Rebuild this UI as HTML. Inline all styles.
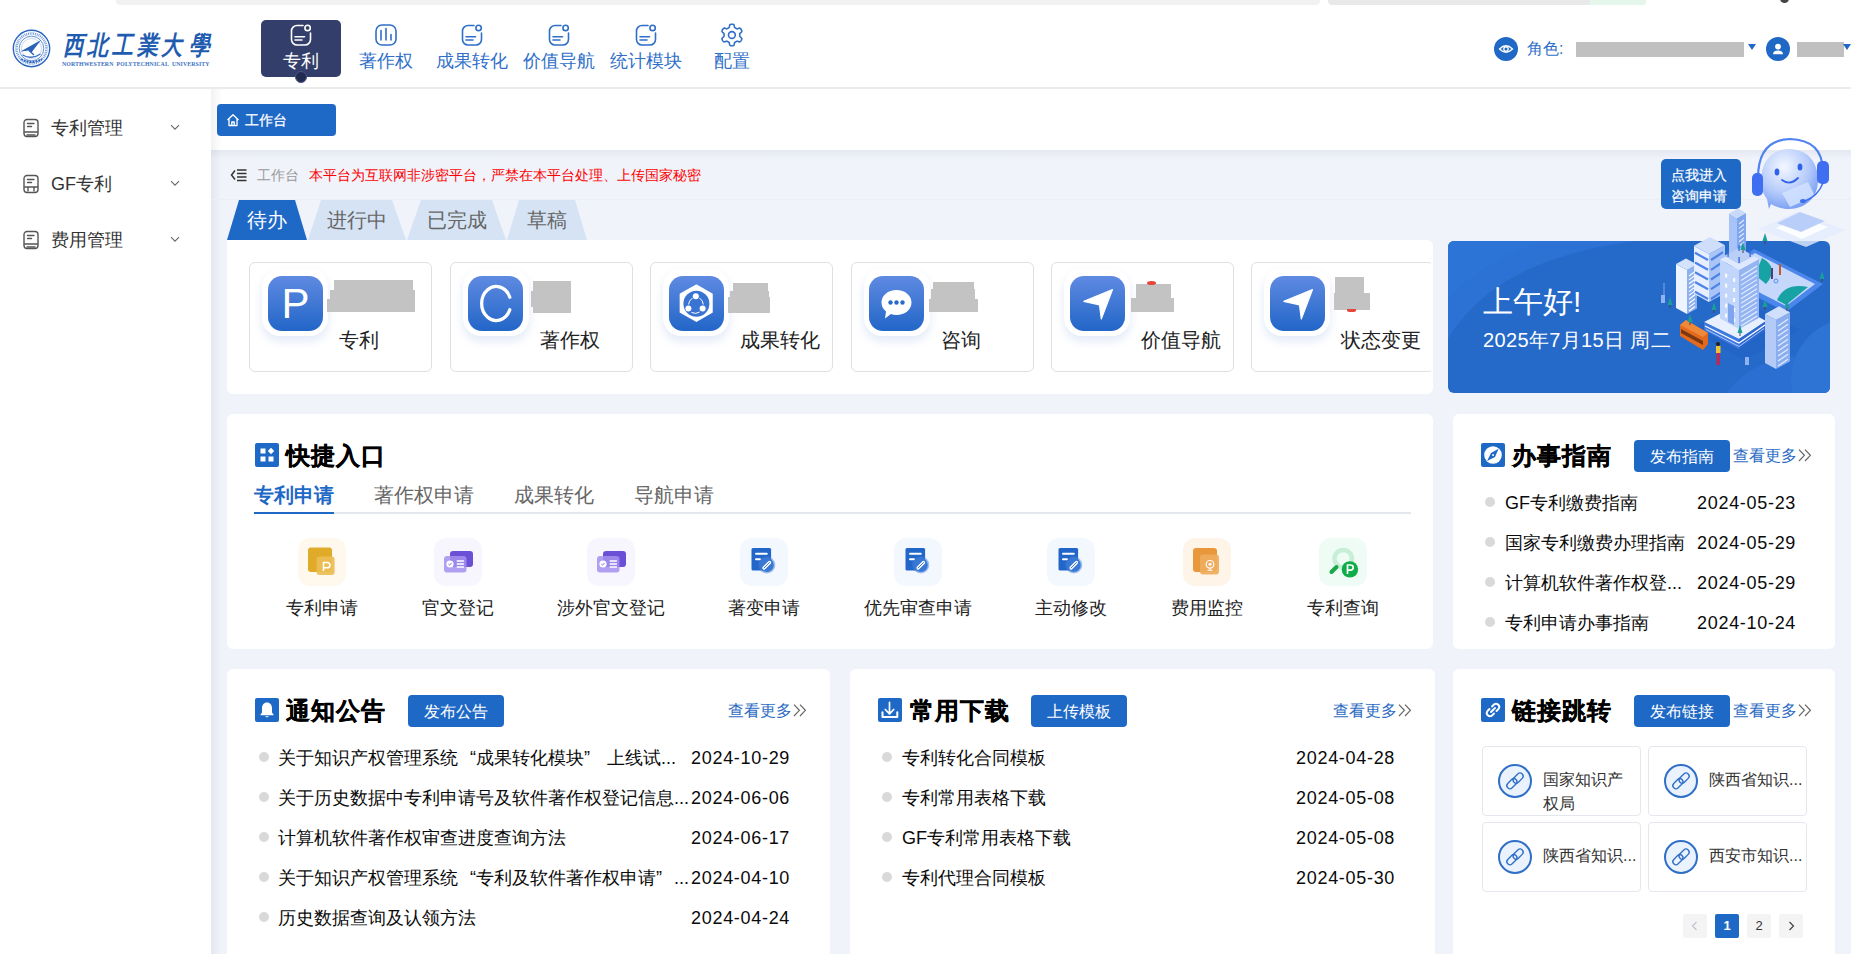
<!DOCTYPE html>
<html><head><meta charset="utf-8">
<style>
*{margin:0;padding:0;box-sizing:border-box}
html,body{width:1851px;height:954px;overflow:hidden;background:#fff;font-family:"Liberation Sans",sans-serif;color:#222}
.a{position:absolute}
.t{position:absolute;white-space:nowrap;line-height:1}
#hdr{left:0;top:0;width:1851px;height:89px;background:#fff;border-bottom:2px solid #eaeceb}
#side{left:0;top:89px;width:211px;height:865px;background:#fff}
#main{left:211px;top:89px;width:1640px;height:865px;background:#f0f3fa}
#tagbar{left:211px;top:89px;width:1640px;height:61px;background:#fff;}
.panel{position:absolute;background:#fff;border-radius:6px}
.btn{position:absolute;background:#1f69c6;color:#fff;border-radius:4px;font-size:16px;text-align:center;line-height:33.6px;height:32px}
.more{position:absolute;color:#2d6cc3;font-size:16px;line-height:1;white-space:nowrap}
.sec-t{position:absolute;font-size:24px;font-weight:bold;color:#000;line-height:1;white-space:nowrap;letter-spacing:1px;-webkit-text-stroke:0.3px #000}
.sec-i{position:absolute;width:24px;height:24px;background:#1f69c6;border-radius:2px}
.dot{position:absolute;width:10px;height:10px;border-radius:50%;background:#d9d9d9}
.row{position:absolute;font-size:18px;line-height:1;white-space:nowrap;color:#0a0a0a}
</style></head><body>

<div id="hdr" class="a"></div>
<div id="side" class="a"></div>
<div id="main" class="a"></div>
<div id="tagbar" class="a"></div>
<!-- top strip -->
<div class="a" style="left:116px;top:0;width:1204px;height:5px;background:#f1f1f1;border-radius:0 0 4px 4px"></div>
<div class="a" style="left:1328px;top:0;width:318px;height:5px;background:#e9e9e9;border-radius:0 0 4px 4px;overflow:hidden"><div class="a" style="left:262px;top:0;width:56px;height:5px;background:#e5f6ea"></div></div>
<div class="a" style="left:1780px;top:-6px;width:9px;height:9px;border-radius:50%;background:#444"></div>


<!-- logo -->
<svg class="a" style="left:12px;top:29px" width="39" height="39" viewBox="0 0 39 39">
<circle cx="19.5" cy="19.5" r="18.2" fill="none" stroke="#2a66c0" stroke-width="1.4"/>
<circle cx="19.5" cy="19.5" r="15" fill="none" stroke="#7aa0da" stroke-width="2.6" stroke-dasharray="1 0.8"/>
<circle cx="19.5" cy="19.5" r="12.3" fill="none" stroke="#3d74c6" stroke-width="0.8"/>
<circle cx="19.5" cy="19.5" r="10" fill="none" stroke="#9ab8e4" stroke-width="0.6"/>
<path d="M8.5 22.5L29 11L19.5 23.5L17 21.5Z" fill="#2a62b8"/>
<path d="M17 21.5L22 26" stroke="#2a62b8" stroke-width="1.4"/>
<path d="M10.5 26Q19.5 31 28.5 25" fill="none" stroke="#3a70c4" stroke-width="1.3"/>
<path d="M9 30Q19.5 36 30 30" fill="none" stroke="#2a66c0" stroke-width="2" stroke-dasharray="2 1"/>
</svg>
<div class="t" style="left:61.7px;top:33px;width:22px;text-align:center;font-size:22px;font-weight:bold;font-style:italic;color:#1f5cb0;transform:scale(0.95,1.17);transform-origin:center top">西</div><div class="t" style="left:86.0px;top:33px;width:22px;text-align:center;font-size:22px;font-weight:bold;font-style:italic;color:#1f5cb0;transform:scale(0.95,1.17);transform-origin:center top">北</div><div class="t" style="left:111.0px;top:33px;width:22px;text-align:center;font-size:22px;font-weight:bold;font-style:italic;color:#1f5cb0;transform:scale(0.95,1.17);transform-origin:center top">工</div><div class="t" style="left:135.6px;top:33px;width:22px;text-align:center;font-size:22px;font-weight:bold;font-style:italic;color:#1f5cb0;transform:scale(0.95,1.17);transform-origin:center top">業</div><div class="t" style="left:160.0px;top:33px;width:22px;text-align:center;font-size:22px;font-weight:bold;font-style:italic;color:#1f5cb0;transform:scale(0.95,1.17);transform-origin:center top">大</div><div class="t" style="left:188.3px;top:33px;width:22px;text-align:center;font-size:22px;font-weight:bold;font-style:italic;color:#1f5cb0;transform:scale(0.95,1.17);transform-origin:center top">學</div>
<div class="t" style="left:62px;top:62px;font-family:'Liberation Serif',serif;font-size:5.8px;font-weight:bold;color:#3a72c4;letter-spacing:0.12px">NORTHWESTERN&nbsp;&nbsp;POLYTECHNICAL&nbsp;&nbsp;UNIVERSITY</div>

<!-- nav -->
<div class="a" style="left:261px;top:20px;width:80px;height:57px;background:#333f6a;border-radius:5px"></div>
<div class="a" style="left:295px;top:71px;width:12px;height:12px;border-radius:50%;background:#222b52;border:1px solid #4a5580"></div>
<svg class="a" style="left:290px;top:24px" width="22" height="22" viewBox="0 0 22 22" fill="none" stroke="#fff" stroke-width="1.6" stroke-linecap="round"><path d="M13 1.5H7A5.5 5.5 0 0 0 1.5 7V15.5A5.5 5.5 0 0 0 7 21H15A5.5 5.5 0 0 0 20.5 15.5V9"/><circle cx="17.6" cy="3.9" r="2.7"/><path d="M5 12.8H14.5M5 16H12"/></svg>
<div class="t" style="left:283px;top:52px;font-size:18px;color:#fff">专利</div>

<svg class="a" style="left:375px;top:24px" width="22" height="22" viewBox="0 0 22 22" fill="none" stroke="#2f6fc8" stroke-width="1.6" stroke-linecap="round"><rect x="1" y="1" width="20" height="20" rx="6"/><path d="M6 6.5V16M11 4.5V16M16 10.5V16"/></svg>
<div class="t" style="left:359px;top:52px;font-size:18px;color:#2f6fc8">著作权</div>

<svg class="a" style="left:461px;top:24px" width="22" height="22" viewBox="0 0 22 22" fill="none" stroke="#2f6fc8" stroke-width="1.6" stroke-linecap="round"><path d="M13 1.5H7A5.5 5.5 0 0 0 1.5 7V15.5A5.5 5.5 0 0 0 7 21H15A5.5 5.5 0 0 0 20.5 15.5V9"/><circle cx="17.6" cy="3.9" r="2.7"/><path d="M5 12.8H14.5M5 16H12"/></svg>
<div class="t" style="left:436px;top:52px;font-size:18px;color:#2f6fc8">成果转化</div>

<svg class="a" style="left:548px;top:24px" width="22" height="22" viewBox="0 0 22 22" fill="none" stroke="#2f6fc8" stroke-width="1.6" stroke-linecap="round"><path d="M13 1.5H7A5.5 5.5 0 0 0 1.5 7V15.5A5.5 5.5 0 0 0 7 21H15A5.5 5.5 0 0 0 20.5 15.5V9"/><circle cx="17.6" cy="3.9" r="2.7"/><path d="M5 12.8H14.5M5 16H12"/></svg>
<div class="t" style="left:523px;top:52px;font-size:18px;color:#2f6fc8">价值导航</div>

<svg class="a" style="left:635px;top:24px" width="22" height="22" viewBox="0 0 22 22" fill="none" stroke="#2f6fc8" stroke-width="1.6" stroke-linecap="round"><path d="M13 1.5H7A5.5 5.5 0 0 0 1.5 7V15.5A5.5 5.5 0 0 0 7 21H15A5.5 5.5 0 0 0 20.5 15.5V9"/><circle cx="17.6" cy="3.9" r="2.7"/><path d="M5 12.8H14.5M5 16H12"/></svg>
<div class="t" style="left:610px;top:52px;font-size:18px;color:#2f6fc8">统计模块</div>

<svg class="a" style="left:719px;top:22px" width="26" height="26" viewBox="0 0 26 26" fill="none" stroke="#2f6fc8" stroke-width="1.6" stroke-linejoin="round"><path d="M20.75 13.00 L20.75 13.27 L20.74 13.55 L20.74 13.82 L20.75 14.10 L20.83 14.40 L21.06 14.74 L21.56 15.16 L22.20 15.67 L22.65 16.17 L22.81 16.61 L22.79 17.00 L22.69 17.36 L22.55 17.71 L22.39 18.05 L22.21 18.38 L22.01 18.70 L21.80 19.01 L21.57 19.30 L21.31 19.57 L20.98 19.78 L20.52 19.86 L19.86 19.72 L19.10 19.42 L18.49 19.20 L18.08 19.17 L17.78 19.25 L17.53 19.38 L17.30 19.52 L17.06 19.66 L16.83 19.80 L16.59 19.93 L16.35 20.06 L16.11 20.20 L15.87 20.35 L15.65 20.57 L15.48 20.94 L15.36 21.58 L15.24 22.39 L15.03 23.03 L14.73 23.39 L14.38 23.57 L14.02 23.66 L13.65 23.71 L13.28 23.74 L12.90 23.75 L12.52 23.74 L12.15 23.71 L11.78 23.66 L11.42 23.57 L11.07 23.39 L10.77 23.03 L10.56 22.39 L10.44 21.58 L10.32 20.94 L10.15 20.57 L9.93 20.35 L9.69 20.20 L9.45 20.06 L9.21 19.93 L8.98 19.80 L8.74 19.66 L8.50 19.52 L8.27 19.38 L8.02 19.25 L7.72 19.17 L7.31 19.20 L6.70 19.42 L5.94 19.72 L5.28 19.86 L4.82 19.78 L4.49 19.57 L4.23 19.30 L4.00 19.01 L3.79 18.70 L3.59 18.38 L3.41 18.05 L3.25 17.71 L3.11 17.36 L3.01 17.00 L2.99 16.61 L3.15 16.17 L3.60 15.67 L4.24 15.16 L4.74 14.74 L4.97 14.40 L5.05 14.10 L5.06 13.82 L5.06 13.55 L5.05 13.27 L5.05 13.00 L5.05 12.73 L5.06 12.45 L5.06 12.18 L5.05 11.90 L4.97 11.60 L4.74 11.26 L4.24 10.84 L3.60 10.33 L3.15 9.83 L2.99 9.39 L3.01 9.00 L3.11 8.64 L3.25 8.29 L3.41 7.95 L3.59 7.62 L3.79 7.30 L4.00 6.99 L4.23 6.70 L4.49 6.43 L4.82 6.22 L5.28 6.14 L5.94 6.28 L6.70 6.58 L7.31 6.80 L7.72 6.83 L8.02 6.75 L8.27 6.62 L8.50 6.48 L8.74 6.34 L8.97 6.20 L9.21 6.07 L9.45 5.94 L9.69 5.80 L9.93 5.65 L10.15 5.43 L10.32 5.06 L10.44 4.42 L10.56 3.61 L10.77 2.97 L11.07 2.61 L11.42 2.43 L11.78 2.34 L12.15 2.29 L12.52 2.26 L12.90 2.25 L13.28 2.26 L13.65 2.29 L14.02 2.34 L14.38 2.43 L14.73 2.61 L15.03 2.97 L15.24 3.61 L15.36 4.42 L15.48 5.06 L15.65 5.43 L15.87 5.65 L16.11 5.80 L16.35 5.94 L16.59 6.07 L16.83 6.20 L17.06 6.34 L17.30 6.48 L17.53 6.62 L17.78 6.75 L18.08 6.83 L18.49 6.80 L19.10 6.58 L19.86 6.28 L20.52 6.14 L20.98 6.22 L21.31 6.43 L21.57 6.70 L21.80 6.99 L22.01 7.30 L22.21 7.62 L22.39 7.95 L22.55 8.29 L22.69 8.64 L22.79 9.00 L22.81 9.39 L22.65 9.83 L22.20 10.33 L21.56 10.84 L21.06 11.26 L20.83 11.60 L20.75 11.90 L20.74 12.18 L20.74 12.45 L20.75 12.73Z"/><circle cx="12.9" cy="13" r="3.4"/></svg>
<div class="t" style="left:714px;top:52px;font-size:18px;color:#2f6fc8">配置</div>

<!-- right header -->
<div class="a" style="left:1494px;top:37px;width:24px;height:24px;border-radius:50%;background:#1f68c5"></div>
<svg class="a" style="left:1498px;top:41px" width="16" height="16" viewBox="0 0 16 16" fill="none" stroke="#fff" stroke-width="1.3"><path d="M1.5 8Q8 1.5 14.5 8Q8 14.5 1.5 8Z"/><circle cx="8" cy="8" r="2.2"/></svg>
<div class="t" style="left:1527px;top:41px;font-size:16px;color:#2f6fc8">角色:</div>
<div class="a" style="left:1576px;top:42px;width:168px;height:15px;background:#c0c0c0"></div>
<div class="a" style="left:1748px;top:44px;width:0;height:0;border-left:4.5px solid transparent;border-right:4.5px solid transparent;border-top:6px solid #1f68c5"></div>
<div class="a" style="left:1766px;top:37px;width:24px;height:24px;border-radius:50%;background:#1f68c5"></div>
<svg class="a" style="left:1770px;top:41px" width="16" height="16" viewBox="0 0 16 16" fill="#fff"><circle cx="8" cy="5.6" r="2.9"/><path d="M3 13.2Q3 9.4 8 9.4Q13 9.4 13 13.2Z"/></svg>
<div class="a" style="left:1797px;top:42px;width:47px;height:15px;background:#c0c0c0"></div>
<div class="a" style="left:1843px;top:44px;width:0;height:0;border-left:4.5px solid transparent;border-right:4.5px solid transparent;border-top:6px solid #1f68c5"></div>

<!-- sidebar shadow -->
<div class="a" style="left:211px;top:89px;width:11px;height:865px;background:linear-gradient(90deg,rgba(0,0,0,0.05),rgba(0,0,0,0))"></div>
<!-- side menu -->
<svg class="a" style="left:23px;top:118px" width="16" height="20" viewBox="0 0 16 20" fill="none" stroke="#555" stroke-width="1.4" stroke-linecap="round"><path d="M4 1.5H12A3 3 0 0 1 15 4.5V15.5A3 3 0 0 1 12 18.5H4A3 3 0 0 1 1 15.5V4.5A3 3 0 0 1 4 1.5Z"/><path d="M4.5 5.5H11M4.5 8.5H8.5M1.5 14H14.5M4 17H12"/></svg>
<div class="t" style="left:51px;top:119px;font-size:18px;color:#333">专利管理</div>
<svg class="a" style="left:170px;top:124px" width="10" height="7" viewBox="0 0 10 7" fill="none" stroke="#666" stroke-width="1.1"><path d="M1 1.2L5 5.2L9 1.2"/></svg>

<svg class="a" style="left:23px;top:174px" width="16" height="20" viewBox="0 0 16 20" fill="none" stroke="#555" stroke-width="1.4" stroke-linecap="round"><path d="M4 1.5H12A3 3 0 0 1 15 4.5V15.5A3 3 0 0 1 12 18.5H4A3 3 0 0 1 1 15.5V4.5A3 3 0 0 1 4 1.5Z"/><path d="M4.5 5.5H11M4.5 8.5H8.5M1.5 13H14.5M5 13V17M11 13V17"/></svg>
<div class="t" style="left:51px;top:175px;font-size:18px;color:#333">GF专利</div>
<svg class="a" style="left:170px;top:180px" width="10" height="7" viewBox="0 0 10 7" fill="none" stroke="#666" stroke-width="1.1"><path d="M1 1.2L5 5.2L9 1.2"/></svg>

<svg class="a" style="left:23px;top:230px" width="16" height="20" viewBox="0 0 16 20" fill="none" stroke="#555" stroke-width="1.4" stroke-linecap="round"><path d="M4 1.5H12A3 3 0 0 1 15 4.5V15.5A3 3 0 0 1 12 18.5H4A3 3 0 0 1 1 15.5V4.5A3 3 0 0 1 4 1.5Z"/><path d="M4.5 5.5H11M4.5 8.5H8.5M1.5 14H14.5M4 17H12"/></svg>
<div class="t" style="left:51px;top:231px;font-size:18px;color:#333">费用管理</div>
<svg class="a" style="left:170px;top:236px" width="10" height="7" viewBox="0 0 10 7" fill="none" stroke="#666" stroke-width="1.1"><path d="M1 1.2L5 5.2L9 1.2"/></svg>

<!-- tag -->
<div class="a" style="left:217px;top:104px;width:119px;height:32px;background:#1f69c6;border-radius:4px"></div>
<svg class="a" style="left:226px;top:113px" width="14" height="14" viewBox="0 0 14 14" fill="none" stroke="#fff" stroke-width="1.3" stroke-linejoin="round"><path d="M1.5 7L7 1.8L12.5 7M3 5.8V12.5H11V5.8M5.8 12.5V9H8.2V12.5"/></svg>
<div class="t" style="left:245px;top:112.5px;font-size:14px;color:#fff;-webkit-text-stroke:0.25px #fff">工作台</div>
<!-- breadcrumb -->
<svg class="a" style="left:230px;top:168px" width="18" height="14" viewBox="0 0 18 14" fill="none" stroke="#333" stroke-width="1.5"><path d="M5 2.5L1.5 7L5 11.5"/><path d="M7 2H16.5M7 5.5H16.5M7 9H16.5M7 12.5H16.5" stroke-width="1.6"/></svg>
<div class="t" style="left:257px;top:168px;font-size:14px;color:#999">工作台</div>
<div class="t" style="left:309px;top:168px;font-size:14px;color:#f00">本平台为互联网非涉密平台，严禁在本平台处理、上传国家秘密</div>
<div class="a" style="left:211px;top:150px;width:1640px;height:9px;background:linear-gradient(180deg,rgba(40,50,90,0.06),rgba(40,50,90,0))"></div>
<div class="a" style="left:211px;top:199px;width:1640px;height:1px;background:#ebeef6"></div>
<!-- tabs -->
<div class="a" style="left:227px;top:200px;width:80px;height:40px;background:#1f69c6;clip-path:polygon(12px 0,68px 0,80px 100%,0 100%)"></div>
<div class="t" style="left:247px;top:210px;font-size:20px;color:#fff">待办</div>
<div class="a" style="left:308px;top:200px;width:98px;height:40px;background:#d5e3f4;clip-path:polygon(13px 0,84px 0,98px 100%,0 100%)"></div>
<div class="t" style="left:327px;top:210px;font-size:20px;color:#666">进行中</div>
<div class="a" style="left:407px;top:200px;width:99px;height:40px;background:#d5e3f4;clip-path:polygon(14px 0,85px 0,99px 100%,0 100%)"></div>
<div class="t" style="left:427px;top:210px;font-size:20px;color:#666">已完成</div>
<div class="a" style="left:507px;top:200px;width:80px;height:40px;background:#d5e3f4;clip-path:polygon(12px 0,68px 0,80px 100%,0 100%)"></div>
<div class="t" style="left:527px;top:210px;font-size:20px;color:#666">草稿</div>

<div class="panel" style="left:227px;top:240px;width:1206px;height:154px;border-radius:0 6px 6px 6px"></div>
<div class="a" style="left:227px;top:240px;width:1204px;height:153px;overflow:hidden">
<div class="a" style="left:22.4px;top:22px;width:183px;height:110px;border:1px solid #e0e0e0;border-radius:6px;background:#fff"></div>
<div class="a" style="left:35.4px;top:29px;width:66px;height:67px;border-radius:18px;background:#fff;box-shadow:0 5px 10px rgba(60,110,200,0.15)"></div>
<div class="a" style="left:41.0px;top:36px;width:55px;height:55px;border-radius:14px;background:linear-gradient(180deg,#5f8ae2,#2266c7);overflow:hidden"><div class="t" style="left:0;top:0;width:55px;line-height:55px;text-align:center;font-size:42px;color:#fff;font-family:'Liberation Sans',sans-serif">P</div></div>
<div class="a" style="left:106.9px;top:40.0px;width:78.9px;height:10.0px;background:#c3c3c3"></div>
<div class="a" style="left:103.0px;top:50.0px;width:84.8px;height:9.2px;background:#c3c3c3"></div>
<div class="a" style="left:100.1px;top:59.2px;width:87.7px;height:12.6px;background:#c3c3c3"></div>
<div class="t" style="left:112.4px;top:90px;font-size:20px;color:#222">专利</div>
<div class="a" style="left:222.8px;top:22px;width:183px;height:110px;border:1px solid #e0e0e0;border-radius:6px;background:#fff"></div>
<div class="a" style="left:235.8px;top:29px;width:66px;height:67px;border-radius:18px;background:#fff;box-shadow:0 5px 10px rgba(60,110,200,0.15)"></div>
<div class="a" style="left:241.4px;top:36px;width:55px;height:55px;border-radius:14px;background:linear-gradient(180deg,#5f8ae2,#2266c7);overflow:hidden"><svg class="a" style="left:0;top:0" width="55" height="55" viewBox="0 0 55 55"><path d="M41.8 21.2A14.6 17 0 1 0 41.8 33.8" fill="none" stroke="#fff" stroke-width="3.3" stroke-linecap="round"/></svg></div>
<div class="a" style="left:306.0px;top:41.0px;width:38.0px;height:32.0px;background:#c3c3c3"></div>
<div class="a" style="left:304.0px;top:51.0px;width:2.5px;height:15.7px;background:#c3c3c3"></div>
<div class="t" style="left:312.8px;top:90px;font-size:20px;color:#222">著作权</div>
<div class="a" style="left:423.2px;top:22px;width:183px;height:110px;border:1px solid #e0e0e0;border-radius:6px;background:#fff"></div>
<div class="a" style="left:436.2px;top:29px;width:66px;height:67px;border-radius:18px;background:#fff;box-shadow:0 5px 10px rgba(60,110,200,0.15)"></div>
<div class="a" style="left:441.8px;top:36px;width:55px;height:55px;border-radius:14px;background:linear-gradient(180deg,#5f8ae2,#2266c7);overflow:hidden"><svg class="a" style="left:0;top:0" width="55" height="55" viewBox="0 0 55 55"><path d="M27.4 9.2L43 18.2V36.2L27.4 45.2L11.4 36.2V18.2Z" fill="#fff" stroke="#fff" stroke-width="1.5" stroke-linejoin="round"/><circle cx="27.4" cy="27.7" r="13" fill="#3a74d3"/><circle cx="26.8" cy="20.3" r="3" fill="#fff"/><circle cx="19.4" cy="32.6" r="3" fill="#fff"/><circle cx="33.6" cy="32.6" r="3" fill="#fff"/><path d="M30.5 22Q34 24.5 34.3 28.5M23.5 22Q19.5 25 19.6 28.5M22.5 36.5Q27 38.5 30.5 36" fill="none" stroke="#fff" stroke-width="1"/></svg></div>
<div class="a" style="left:506.0px;top:43.0px;width:35.0px;height:8.0px;background:#c3c3c3"></div>
<div class="a" style="left:503.0px;top:51.0px;width:39.0px;height:6.0px;background:#c3c3c3"></div>
<div class="a" style="left:501.0px;top:57.0px;width:42.0px;height:16.0px;background:#c3c3c3"></div>
<div class="t" style="left:513.2px;top:90px;font-size:20px;color:#222">成果转化</div>
<div class="a" style="left:623.6px;top:22px;width:183px;height:110px;border:1px solid #e0e0e0;border-radius:6px;background:#fff"></div>
<div class="a" style="left:636.6px;top:29px;width:66px;height:67px;border-radius:18px;background:#fff;box-shadow:0 5px 10px rgba(60,110,200,0.15)"></div>
<div class="a" style="left:642.2px;top:36px;width:55px;height:55px;border-radius:14px;background:linear-gradient(180deg,#5f8ae2,#2266c7);overflow:hidden"><svg class="a" style="left:9px;top:10px" width="37" height="37" viewBox="0 0 37 37"><path d="M18.5 4C27 4 33.5 9.5 33.5 16.5S27 29 18.5 29C16.5 29 14.6 28.7 12.9 28.1L7 32.5L8 25.5C5 23.2 3.5 20 3.5 16.5C3.5 9.5 10 4 18.5 4Z" fill="#fff"/><circle cx="12.5" cy="16.5" r="2.2" fill="#2a68c9"/><circle cx="18.5" cy="16.5" r="2.2" fill="#2a68c9"/><circle cx="24.5" cy="16.5" r="2.2" fill="#2a68c9"/></svg></div>
<div class="a" style="left:706.0px;top:42.0px;width:41.0px;height:7.0px;background:#c3c3c3"></div>
<div class="a" style="left:704.0px;top:49.0px;width:44.0px;height:10.0px;background:#c3c3c3"></div>
<div class="a" style="left:702.0px;top:59.0px;width:49.0px;height:13.0px;background:#c3c3c3"></div>
<div class="t" style="left:713.6px;top:90px;font-size:20px;color:#222">咨询</div>
<div class="a" style="left:824.0px;top:22px;width:183px;height:110px;border:1px solid #e0e0e0;border-radius:6px;background:#fff"></div>
<div class="a" style="left:837.0px;top:29px;width:66px;height:67px;border-radius:18px;background:#fff;box-shadow:0 5px 10px rgba(60,110,200,0.15)"></div>
<div class="a" style="left:842.6px;top:36px;width:55px;height:55px;border-radius:14px;background:linear-gradient(180deg,#5f8ae2,#2266c7);overflow:hidden"><svg class="a" style="left:0;top:0" width="55" height="55" viewBox="0 0 55 55"><path d="M13.8 25.4L42.5 13.5L31.3 43L29.5 28.8Z" fill="#fff" stroke="#fff" stroke-width="1.2" stroke-linejoin="round"/></svg></div>
<div class="a" style="left:909.0px;top:44.0px;width:35.0px;height:14.0px;background:#c3c3c3"></div>
<div class="a" style="left:904.0px;top:58.0px;width:43.0px;height:14.0px;background:#c3c3c3"></div>
<div class="t" style="left:914.0px;top:90px;font-size:20px;color:#222">价值导航</div>
<div class="a" style="left:1024.4px;top:22px;width:183px;height:110px;border:1px solid #e0e0e0;border-radius:6px;background:#fff"></div>
<div class="a" style="left:1037.4px;top:29px;width:66px;height:67px;border-radius:18px;background:#fff;box-shadow:0 5px 10px rgba(60,110,200,0.15)"></div>
<div class="a" style="left:1043.0px;top:36px;width:55px;height:55px;border-radius:14px;background:linear-gradient(180deg,#5f8ae2,#2266c7);overflow:hidden"><svg class="a" style="left:0;top:0" width="55" height="55" viewBox="0 0 55 55"><path d="M13.8 25.4L42.5 13.5L31.3 43L29.5 28.8Z" fill="#fff" stroke="#fff" stroke-width="1.2" stroke-linejoin="round"/></svg></div>
<div class="a" style="left:1108.0px;top:37.0px;width:29.0px;height:16.0px;background:#c3c3c3"></div>
<div class="a" style="left:1107.0px;top:53.0px;width:36.0px;height:17.0px;background:#c3c3c3"></div>
<div class="t" style="left:1114.4px;top:90px;font-size:20px;color:#222">状态变更</div>
<div class="a" style="left:920px;top:41px;width:9px;height:4px;border-radius:50%;background:#e8453c"></div>
<div class="a" style="left:1120px;top:69px;width:9px;height:3px;border-radius:0 0 50% 50%;background:#e8453c"></div>
</div>
<svg class="a" style="left:1448px;top:130px" width="403" height="270" viewBox="0 0 403 270"><defs><clipPath id="bc"><rect x="0" y="111" width="382" height="152" rx="6"/></clipPath><radialGradient id="rg" cx="0.4" cy="0.3" r="0.7"><stop offset="0" stop-color="#f4f7ff"/><stop offset="0.6" stop-color="#b8cdfb"/><stop offset="1" stop-color="#7ea3f3"/></radialGradient></defs><g clip-path="url(#bc)"><rect x="0" y="111" width="382" height="152" fill="#2569c9"/><path d="M0 111H190C150 115 100 127 60 150C30 168 10 192 0 209Z" fill="#2c72d5"/><path d="M0 111H95C70 118 40 135 20 150C10 158 4 165 0 170Z" fill="#2e76d8" opacity="0.6"/><circle cx="352" cy="318" r="92" fill="#2a6fd1"/><circle cx="405" cy="250" r="62" fill="#2d74d5"/><polygon points="242.0,200.0 297.0,170.0 352.0,200.0 297.0,230.0" fill="#1f5fc0" opacity="0.35"/></g><polygon points="306.0,119.0 375.0,154.0 338.0,182.0 268.0,146.0" fill="#4a86ec"/><polygon points="307.0,123.0 367.0,154.0 338.0,176.0 275.0,144.0" fill="#c5d7fa"/><path d="M314 128 Q332 138 318 154 L307 145Z" fill="#17a2a3"/><path d="M329 170 Q337 152 360 157 L338 175Z" fill="#17a2a3"/><circle cx="328" cy="151" r="2" fill="none" stroke="#5b8ef0" stroke-width="1"/><rect x="323" y="138" width="2" height="11" fill="#5a3a7a"/><rect x="331" y="134" width="2" height="11" fill="#c25a2a"/><polygon points="289.0,88.0 281.0,83.6 281.0,123.6 289.0,128.0" fill="#a8c3f7"/><polygon points="289.0,88.0 298.0,83.0 298.0,123.0 289.0,128.0" fill="#7fa6ee"/><polygon points="289.0,88.0 281.0,83.6 290.0,78.6 298.0,83.0" fill="#c8daf9"/><line x1="291.0" y1="94.0" x2="296.0" y2="90.0" stroke="#e2ecff" stroke-width="1.2"/><line x1="291.0" y1="98.4" x2="296.0" y2="94.5" stroke="#e2ecff" stroke-width="1.2"/><line x1="291.0" y1="102.9" x2="296.0" y2="98.9" stroke="#e2ecff" stroke-width="1.2"/><line x1="291.0" y1="107.3" x2="296.0" y2="103.3" stroke="#e2ecff" stroke-width="1.2"/><line x1="291.0" y1="111.7" x2="296.0" y2="107.8" stroke="#e2ecff" stroke-width="1.2"/><line x1="291.0" y1="116.1" x2="296.0" y2="112.2" stroke="#e2ecff" stroke-width="1.2"/><line x1="291.0" y1="120.6" x2="296.0" y2="116.6" stroke="#e2ecff" stroke-width="1.2"/><line x1="291.0" y1="125.0" x2="296.0" y2="121.0" stroke="#e2ecff" stroke-width="1.2"/><polygon points="256.0,192.0 289.0,175.0 318.0,191.0 291.0,209.0" fill="#e8f0ff"/><polygon points="256.0,192.0 291.0,209.0 291.0,219.0 256.0,200.0" fill="#3f7ae2"/><polygon points="291.0,209.0 318.0,191.0 318.0,200.0 291.0,219.0" fill="#2f68d0"/><polyline points="257.0,196.0 291.0,213.0 317.0,195.0" fill="none" stroke="#fff" stroke-width="1.3"/><polyline points="258.0,199.5 291.0,216.5 316.0,198.5" fill="none" stroke="#a8c4fa" stroke-width="1"/><polygon points="239.0,140.0 228.0,133.9 228.0,177.9 239.0,184.0" fill="#eef4ff"/><polygon points="239.0,140.0 249.0,134.5 249.0,178.5 239.0,184.0" fill="#8db0f0"/><polygon points="239.0,140.0 228.0,133.9 238.0,128.4 249.0,134.5" fill="#d5e2fb"/><line x1="241.0" y1="146.0" x2="247.0" y2="141.5" stroke="#ffffff" stroke-width="1.1"/><line x1="241.0" y1="149.9" x2="247.0" y2="145.4" stroke="#ffffff" stroke-width="1.1"/><line x1="241.0" y1="153.8" x2="247.0" y2="149.3" stroke="#ffffff" stroke-width="1.1"/><line x1="241.0" y1="157.7" x2="247.0" y2="153.2" stroke="#ffffff" stroke-width="1.1"/><line x1="241.0" y1="161.6" x2="247.0" y2="157.1" stroke="#ffffff" stroke-width="1.1"/><line x1="241.0" y1="165.4" x2="247.0" y2="160.9" stroke="#ffffff" stroke-width="1.1"/><line x1="241.0" y1="169.3" x2="247.0" y2="164.8" stroke="#ffffff" stroke-width="1.1"/><line x1="241.0" y1="173.2" x2="247.0" y2="168.7" stroke="#ffffff" stroke-width="1.1"/><line x1="241.0" y1="177.1" x2="247.0" y2="172.6" stroke="#ffffff" stroke-width="1.1"/><line x1="241.0" y1="181.0" x2="247.0" y2="176.5" stroke="#ffffff" stroke-width="1.1"/><polygon points="261.0,124.0 246.0,115.8 246.0,163.8 261.0,172.0" fill="#e6eeff"/><polygon points="261.0,124.0 277.0,115.2 277.0,163.2 261.0,172.0" fill="#a9c4f7"/><polygon points="261.0,124.0 246.0,115.8 262.0,107.0 277.0,115.2" fill="#cfdefb"/><line x1="263.0" y1="130.0" x2="275.0" y2="122.2" stroke="#4d82e8" stroke-width="2.2"/><line x1="263.0" y1="139.8" x2="275.0" y2="131.9" stroke="#4d82e8" stroke-width="2.2"/><line x1="263.0" y1="149.5" x2="275.0" y2="141.7" stroke="#4d82e8" stroke-width="2.2"/><line x1="263.0" y1="159.2" x2="275.0" y2="151.4" stroke="#4d82e8" stroke-width="2.2"/><line x1="263.0" y1="169.0" x2="275.0" y2="161.2" stroke="#4d82e8" stroke-width="2.2"/><line x1="260.0" y1="130.0" x2="247.0" y2="122.8" stroke="#4d82e8" stroke-width="2.2"/><line x1="260.0" y1="139.8" x2="247.0" y2="132.5" stroke="#4d82e8" stroke-width="2.2"/><line x1="260.0" y1="149.5" x2="247.0" y2="142.2" stroke="#4d82e8" stroke-width="2.2"/><line x1="260.0" y1="159.2" x2="247.0" y2="152.0" stroke="#4d82e8" stroke-width="2.2"/><line x1="260.0" y1="169.0" x2="247.0" y2="161.8" stroke="#4d82e8" stroke-width="2.2"/><polygon points="291.0,140.0 272.0,129.6 272.0,188.6 291.0,199.0" fill="#c2d5fa"/><polygon points="291.0,140.0 311.0,129.0 311.0,188.0 291.0,199.0" fill="#94b5f2"/><polygon points="291.0,140.0 272.0,129.6 292.0,118.6 311.0,129.0" fill="#dfe9fd"/><line x1="293.0" y1="146.0" x2="309.0" y2="136.0" stroke="#e6eeff" stroke-width="1.1"/><line x1="293.0" y1="150.5" x2="309.0" y2="140.5" stroke="#e6eeff" stroke-width="1.1"/><line x1="293.0" y1="155.1" x2="309.0" y2="145.1" stroke="#e6eeff" stroke-width="1.1"/><line x1="293.0" y1="159.6" x2="309.0" y2="149.6" stroke="#e6eeff" stroke-width="1.1"/><line x1="293.0" y1="164.2" x2="309.0" y2="154.2" stroke="#e6eeff" stroke-width="1.1"/><line x1="293.0" y1="168.7" x2="309.0" y2="158.7" stroke="#e6eeff" stroke-width="1.1"/><line x1="293.0" y1="173.3" x2="309.0" y2="163.3" stroke="#e6eeff" stroke-width="1.1"/><line x1="293.0" y1="177.8" x2="309.0" y2="167.8" stroke="#e6eeff" stroke-width="1.1"/><line x1="293.0" y1="182.4" x2="309.0" y2="172.4" stroke="#e6eeff" stroke-width="1.1"/><line x1="293.0" y1="186.9" x2="309.0" y2="176.9" stroke="#e6eeff" stroke-width="1.1"/><line x1="293.0" y1="191.5" x2="309.0" y2="181.5" stroke="#e6eeff" stroke-width="1.1"/><line x1="293.0" y1="196.0" x2="309.0" y2="186.0" stroke="#e6eeff" stroke-width="1.1"/><polygon points="291.0,134.0 276.0,126.0 291.0,118.0 306.0,126.0" fill="#b9cff8"/><rect x="279.4" y="121.0" width="1.4" height="6" fill="#3d6fd8"/><rect x="301.4" y="121.0" width="1.4" height="6" fill="#3d6fd8"/><rect x="290.4" y="127.0" width="1.4" height="6" fill="#3d6fd8"/><rect x="290.4" y="115.0" width="1.4" height="6" fill="#3d6fd8"/><rect x="285.0" y="148.0" width="2.2" height="4" fill="#ffffff" opacity="0.85"/><rect x="277.0" y="143.6" width="2.2" height="4" fill="#ffffff" opacity="0.85"/><rect x="285.0" y="158.0" width="2.2" height="4" fill="#ffffff" opacity="0.85"/><rect x="277.0" y="153.6" width="2.2" height="4" fill="#ffffff" opacity="0.85"/><rect x="285.0" y="168.0" width="2.2" height="4" fill="#ffffff" opacity="0.85"/><rect x="277.0" y="163.6" width="2.2" height="4" fill="#ffffff" opacity="0.85"/><rect x="285.0" y="178.0" width="2.2" height="4" fill="#ffffff" opacity="0.85"/><rect x="277.0" y="173.6" width="2.2" height="4" fill="#ffffff" opacity="0.85"/><rect x="285.0" y="188.0" width="2.2" height="4" fill="#ffffff" opacity="0.85"/><rect x="277.0" y="183.6" width="2.2" height="4" fill="#ffffff" opacity="0.85"/><polygon points="280.0,173.0 286.0,176.0 286.0,195.0 280.0,192.0" fill="#7fa5ee"/><polygon points="328.0,190.0 317.0,183.9 317.0,232.9 328.0,239.0" fill="#b4cbf7"/><polygon points="328.0,190.0 342.0,182.3 342.0,231.3 328.0,239.0" fill="#8aaef0"/><polygon points="328.0,190.0 317.0,183.9 331.0,176.2 342.0,182.3" fill="#d0dffb"/><line x1="330.0" y1="196.0" x2="340.0" y2="189.3" stroke="#e4edff" stroke-width="1.1"/><line x1="330.0" y1="201.0" x2="340.0" y2="194.3" stroke="#e4edff" stroke-width="1.1"/><line x1="330.0" y1="206.0" x2="340.0" y2="199.3" stroke="#e4edff" stroke-width="1.1"/><line x1="330.0" y1="211.0" x2="340.0" y2="204.3" stroke="#e4edff" stroke-width="1.1"/><line x1="330.0" y1="216.0" x2="340.0" y2="209.3" stroke="#e4edff" stroke-width="1.1"/><line x1="330.0" y1="221.0" x2="340.0" y2="214.3" stroke="#e4edff" stroke-width="1.1"/><line x1="330.0" y1="226.0" x2="340.0" y2="219.3" stroke="#e4edff" stroke-width="1.1"/><line x1="330.0" y1="231.0" x2="340.0" y2="224.3" stroke="#e4edff" stroke-width="1.1"/><line x1="330.0" y1="236.0" x2="340.0" y2="229.3" stroke="#e4edff" stroke-width="1.1"/><polygon points="232.0,195.0 238.0,190.0 260.0,203.0 260.0,214.0 255.0,220.0 232.0,206.0" fill="#e36a1c"/><polygon points="233.0,199.0 255.0,211.0 255.0,215.0 233.0,203.0" fill="#4a2410" opacity="0.7"/><polygon points="238.0,190.0 260.0,203.0 255.0,207.0 232.0,195.0" fill="#f0883a"/><circle cx="270" cy="214" r="2" fill="#222"/><rect x="268" y="216" width="4.5" height="7" fill="#f2c230"/><rect x="268.5" y="223" width="3.5" height="12" fill="#b8285a"/><path d="M295 112L297.5 120H292.5Z" fill="#1b9e9a"/><rect x="294.5" y="120" width="1" height="3" fill="#444"/><path d="M317 103L319.5 111H314.5Z" fill="#1b9e9a"/><rect x="316.5" y="111" width="1" height="3" fill="#444"/><path d="M374 141L376.5 149H371.5Z" fill="#1b9e9a"/><rect x="373.5" y="149" width="1" height="3" fill="#444"/><path d="M222 167L224.5 175H219.5Z" fill="#1b9e9a"/><rect x="221.5" y="175" width="1" height="3" fill="#444"/><path d="M242 184L244.5 192H239.5Z" fill="#1b9e9a"/><rect x="241.5" y="192" width="1" height="3" fill="#444"/><path d="M266 172L268.5 180H263.5Z" fill="#1b9e9a"/><rect x="265.5" y="180" width="1" height="3" fill="#444"/><path d="M292 195L294.5 203H289.5Z" fill="#1b9e9a"/><rect x="291.5" y="203" width="1" height="3" fill="#444"/><path d="M317 169L319.5 177H314.5Z" fill="#1b9e9a"/><rect x="316.5" y="177" width="1" height="3" fill="#444"/><path d="M339 170L341.5 178H336.5Z" fill="#1b9e9a"/><rect x="338.5" y="178" width="1" height="3" fill="#444"/><rect x="213" y="165" width="4" height="8" fill="#8eb2f2"/><line x1="216" y1="165" x2="216" y2="153" stroke="#9db8ee" stroke-width="0.8"/><rect x="297" y="227" width="4" height="8" fill="#8eb2f2"/><polygon points="310.0,99.0 349.0,82.0 397.0,100.0 358.0,117.0" fill="#e3ebfc" opacity="0.8"/><polygon points="328.0,98.0 353.0,87.0 380.0,97.0 354.0,109.0" fill="#fbfdff"/><polygon points="329.0,93.0 352.0,82.0 377.0,91.0 353.0,102.0" fill="#b9cff9"/><path d="M310 48Q310 10 342 9Q374 10 375 40" fill="none" stroke="#4f83f0" stroke-width="2.2"/><path d="M341 19C360 19 370 33 370 50C370 68 357 79 341 79C334 79 328 77 323 74L321 79L319 69C315 64 313 57 313 50C313 33 323 19 341 19Z" fill="url(#rg)"/><ellipse cx="329" cy="42" rx="2.4" ry="3.6" fill="#2e62e8"/><ellipse cx="352" cy="37" rx="2.4" ry="3.6" fill="#2e62e8"/><path d="M334 50Q342 56 350 48" fill="none" stroke="#2e62e8" stroke-width="1.8" stroke-linecap="round"/><rect x="304" y="43" width="11" height="23" rx="5" fill="#3f6ff0"/><rect x="369" y="31" width="12" height="23" rx="5" fill="#3f6ff0"/><polygon points="334.0,63.0 360.0,52.0 367.0,66.0 342.0,77.0" fill="#cfe0ff" opacity="0.9"/><path d="M375 53Q370 66 357 71" fill="none" stroke="#3f6ff0" stroke-width="1.5"/><ellipse cx="355" cy="71" rx="3" ry="2" fill="#3f6ff0"/></svg>
<div class="t" style="left:1483px;top:287px;font-size:30px;color:#fff">上午好!</div>
<div class="t" style="left:1483px;top:330px;font-size:20px;color:#fff;letter-spacing:0.35px">2025年7月15日 周二</div>
<div class="a" style="left:1661px;top:159px;width:80px;height:50px;background:#1f69c6;border-radius:5px"></div>
<div class="t" style="left:1671px;top:165px;font-size:14px;line-height:21px;color:#fff;-webkit-text-stroke:0.2px #fff">点我进入<br>咨询申请</div>

<div class="panel" style="left:227px;top:414px;width:1206px;height:235px"></div>
<div class="sec-i" style="left:255px;top:443px"></div>
<svg class="a" style="left:255px;top:443px" width="24" height="24" viewBox="0 0 24 24" fill="#fff"><rect x="5.5" y="5.5" width="5" height="5"/><rect x="5.5" y="13.5" width="5" height="5"/><rect x="13.5" y="13.5" width="5" height="5"/><path d="M16 4.8L19.2 8L16 11.2L12.8 8Z"/></svg>
<div class="sec-t" style="left:286px;top:444px">快捷入口</div>
<div class="a" style="left:254px;top:512px;width:1157px;height:2px;background:#e4e7ed"></div>
<div class="a" style="left:254px;top:512px;width:80px;height:2px;background:#1f69c6"></div>
<div class="t" style="left:254px;top:485px;font-size:20px;color:#1f69c6;font-weight:bold">专利申请</div>
<div class="t" style="left:374px;top:485px;font-size:20px;color:#666">著作权申请</div>
<div class="t" style="left:514px;top:485px;font-size:20px;color:#666">成果转化</div>
<div class="t" style="left:634px;top:485px;font-size:20px;color:#666">导航申请</div>
<div class="a" style="left:297.8px;top:538px;width:48px;height:48px;border-radius:12px;background:#fff8ec"></div>
<svg class="a" style="left:297.8px;top:538px" width="48" height="48" viewBox="0 0 48 48"><rect x="10" y="9.5" width="24" height="24.5" rx="3" fill="#e1ab2a"/><rect x="18.6" y="18.6" width="18" height="18.4" rx="3" fill="#ebbd55" opacity="0.92"/><path d="M25.5 33V24.5H29Q32 24.5 32 27.2Q32 29.8 29 29.8H25.5" fill="none" stroke="#fff" stroke-width="1.6"/></svg>
<div class="t" style="left:285.8px;top:598.7px;font-size:18px;color:#222">专利申请</div>
<div class="a" style="left:434.0px;top:538px;width:48px;height:48px;border-radius:12px;background:#f7f6fe"></div>
<svg class="a" style="left:434.0px;top:538px" width="48" height="48" viewBox="0 0 48 48"><rect x="16" y="13" width="23" height="16" rx="3" fill="#6b4fd6"/><rect x="10" y="18" width="22.5" height="16.5" rx="3" fill="#a591ee" opacity="0.85"/><circle cx="16" cy="26" r="3.6" fill="#fff"/><path d="M14.4 26L15.6 27.2L17.6 24.9" fill="none" stroke="#8a72e6" stroke-width="1"/><path d="M22.7 23H29.9M22.7 26H29.9M22.7 29H29.9" stroke="#fff" stroke-width="1.3"/></svg>
<div class="t" style="left:422.0px;top:598.7px;font-size:18px;color:#222">官文登记</div>
<div class="a" style="left:587.0px;top:538px;width:48px;height:48px;border-radius:12px;background:#f7f6fe"></div>
<svg class="a" style="left:587.0px;top:538px" width="48" height="48" viewBox="0 0 48 48"><rect x="16" y="13" width="23" height="16" rx="3" fill="#6b4fd6"/><rect x="10" y="18" width="22.5" height="16.5" rx="3" fill="#a591ee" opacity="0.85"/><circle cx="16" cy="26" r="3.6" fill="#fff"/><path d="M14.4 26L15.6 27.2L17.6 24.9" fill="none" stroke="#8a72e6" stroke-width="1"/><path d="M22.7 23H29.9M22.7 26H29.9M22.7 29H29.9" stroke="#fff" stroke-width="1.3"/></svg>
<div class="t" style="left:557.0px;top:598.7px;font-size:18px;color:#222">涉外官文登记</div>
<div class="a" style="left:740.2px;top:538px;width:48px;height:48px;border-radius:12px;background:#f3f8ff"></div>
<svg class="a" style="left:740.2px;top:538px" width="48" height="48" viewBox="0 0 48 48"><rect x="11.5" y="10" width="19.6" height="22.4" rx="1.5" fill="#2266c9"/><path d="M16 15.7H26.8M16 21.2H20" stroke="#fff" stroke-width="2" stroke-linecap="round"/><circle cx="26.8" cy="27" r="8.5" fill="#4a86dc" opacity="0.5"/><circle cx="26.8" cy="27" r="7" fill="#3a78d6"/><path d="M24 30L29.5 24.5" stroke="#fff" stroke-width="3.2" stroke-linecap="round"/><path d="M24 30L29.5 24.5" stroke="#3a78d6" stroke-width="1" stroke-linecap="round"/></svg>
<div class="t" style="left:728.2px;top:598.7px;font-size:18px;color:#222">著变申请</div>
<div class="a" style="left:893.8px;top:538px;width:48px;height:48px;border-radius:12px;background:#f3f8ff"></div>
<svg class="a" style="left:893.8px;top:538px" width="48" height="48" viewBox="0 0 48 48"><rect x="11.5" y="10" width="19.6" height="22.4" rx="1.5" fill="#2266c9"/><path d="M16 15.7H26.8M16 21.2H20" stroke="#fff" stroke-width="2" stroke-linecap="round"/><circle cx="26.8" cy="27" r="8.5" fill="#4a86dc" opacity="0.5"/><circle cx="26.8" cy="27" r="7" fill="#3a78d6"/><path d="M24 30L29.5 24.5" stroke="#fff" stroke-width="3.2" stroke-linecap="round"/><path d="M24 30L29.5 24.5" stroke="#3a78d6" stroke-width="1" stroke-linecap="round"/></svg>
<div class="t" style="left:863.8px;top:598.7px;font-size:18px;color:#222">优先审查申请</div>
<div class="a" style="left:1046.8px;top:538px;width:48px;height:48px;border-radius:12px;background:#f3f8ff"></div>
<svg class="a" style="left:1046.8px;top:538px" width="48" height="48" viewBox="0 0 48 48"><rect x="11.5" y="10" width="19.6" height="22.4" rx="1.5" fill="#2266c9"/><path d="M16 15.7H26.8M16 21.2H20" stroke="#fff" stroke-width="2" stroke-linecap="round"/><circle cx="26.8" cy="27" r="8.5" fill="#4a86dc" opacity="0.5"/><circle cx="26.8" cy="27" r="7" fill="#3a78d6"/><path d="M24 30L29.5 24.5" stroke="#fff" stroke-width="3.2" stroke-linecap="round"/><path d="M24 30L29.5 24.5" stroke="#3a78d6" stroke-width="1" stroke-linecap="round"/></svg>
<div class="t" style="left:1034.8px;top:598.7px;font-size:18px;color:#222">主动修改</div>
<div class="a" style="left:1183.0px;top:538px;width:48px;height:48px;border-radius:12px;background:#fff4e8"></div>
<svg class="a" style="left:1183.0px;top:538px" width="48" height="48" viewBox="0 0 48 48"><rect x="10" y="10" width="24" height="24" rx="3" fill="#e8973a"/><rect x="17" y="16.5" width="19" height="20" rx="3" fill="#eeac5c" opacity="0.92"/><circle cx="27" cy="26.3" r="3.8" fill="none" stroke="#fff" stroke-width="1.2"/><circle cx="27" cy="26.3" r="1.5" fill="#fff"/><path d="M27 30V32M24.5 32.3H29.5" stroke="#fff" stroke-width="1"/></svg>
<div class="t" style="left:1171.0px;top:598.7px;font-size:18px;color:#222">费用监控</div>
<div class="a" style="left:1319.0px;top:538px;width:48px;height:48px;border-radius:12px;background:#effcf5"></div>
<svg class="a" style="left:1319.0px;top:538px" width="48" height="48" viewBox="0 0 48 48"><circle cx="24.2" cy="20.6" r="8.7" fill="none" stroke="#c7efd7" stroke-width="4.5"/><path d="M12.5 34L17.5 29" stroke="#17a84a" stroke-width="4" stroke-linecap="round"/><circle cx="30.9" cy="31.4" r="8.2" fill="#0fac4a"/><path d="M28.5 36V27H31.5Q34.2 27 34.2 29.6Q34.2 32.2 31.5 32.2H28.5" fill="none" stroke="#fff" stroke-width="1.7"/></svg>
<div class="t" style="left:1307.0px;top:598.7px;font-size:18px;color:#222">专利查询</div>
<div class="panel" style="left:1453px;top:414px;width:382px;height:235px"></div>
<div class="sec-i" style="left:1481px;top:443px"></div>
<svg class="a" style="left:1481px;top:443px" width="24" height="24" viewBox="0 0 24 24"><circle cx="12" cy="12" r="8.8" fill="#fff"/><path d="M17.6 5.8L14 14L6.1 17.9L10 10Z" fill="#1f69c6"/><rect x="11.2" y="11.2" width="1.7" height="1.7" fill="#fff"/></svg>
<div class="sec-t" style="left:1512px;top:444px">办事指南</div>
<div class="btn" style="left:1634px;top:440px;width:96px">发布指南</div>
<div class="more" style="left:1733px;top:447.5px">查看更多<svg style="position:absolute;left:65px;top:1.5px" width="14" height="13" viewBox="0 0 14 13" fill="none" stroke="#666" stroke-width="1.2"><path d="M1 0.6L6.4 6.3L1 12M7 0.6L12.4 6.3L7 12"/></svg></div>
<div class="dot" style="left:1485px;top:497px"></div>
<div class="row" style="left:1505px;top:493.7px">GF专利缴费指南</div>
<div class="row" style="left:1697px;top:493.7px;letter-spacing:0.7px">2024-05-23</div>
<div class="dot" style="left:1485px;top:537px"></div>
<div class="row" style="left:1505px;top:533.7px">国家专利缴费办理指南</div>
<div class="row" style="left:1697px;top:533.7px;letter-spacing:0.7px">2024-05-29</div>
<div class="dot" style="left:1485px;top:577px"></div>
<div class="row" style="left:1505px;top:573.7px">计算机软件著作权登...</div>
<div class="row" style="left:1697px;top:573.7px;letter-spacing:0.7px">2024-05-29</div>
<div class="dot" style="left:1485px;top:617px"></div>
<div class="row" style="left:1505px;top:613.7px">专利申请办事指南</div>
<div class="row" style="left:1697px;top:613.7px;letter-spacing:0.7px">2024-10-24</div>
<div class="panel" style="left:227px;top:669px;width:603px;height:300px"></div>
<div class="sec-i" style="left:255px;top:698px"></div>
<svg class="a" style="left:255px;top:698px" width="24" height="24" viewBox="0 0 24 24" fill="#fff"><path d="M12 4.5C8.8 4.5 7 7 7 10V14.5L5.5 16.5V17.2H18.5V16.5L17 14.5V10C17 7 15.2 4.5 12 4.5Z"/><path d="M10 18.3Q12 20.5 14 18.3Z"/></svg>
<div class="sec-t" style="left:286px;top:699px">通知公告</div>
<div class="btn" style="left:408px;top:695px;width:96px">发布公告</div>
<div class="more" style="left:728px;top:702.5px">查看更多<svg style="position:absolute;left:65px;top:1.5px" width="14" height="13" viewBox="0 0 14 13" fill="none" stroke="#666" stroke-width="1.2"><path d="M1 0.6L6.4 6.3L1 12M7 0.6L12.4 6.3L7 12"/></svg></div>
<div class="dot" style="left:259px;top:752px"></div>
<div class="row" style="left:278px;top:748.7px">关于知识产权管理系统<span style="display:inline-block;width:18px;text-align:right">“</span>成果转化模块<span style="display:inline-block;width:18px;text-align:left">”</span> 上线试...</div>
<div class="row" style="left:691px;top:748.7px;letter-spacing:0.7px">2024-10-29</div>
<div class="dot" style="left:259px;top:792px"></div>
<div class="row" style="left:278px;top:788.7px">关于历史数据中专利申请号及软件著作权登记信息...</div>
<div class="row" style="left:691px;top:788.7px;letter-spacing:0.7px">2024-06-06</div>
<div class="dot" style="left:259px;top:832px"></div>
<div class="row" style="left:278px;top:828.7px">计算机软件著作权审查进度查询方法</div>
<div class="row" style="left:691px;top:828.7px;letter-spacing:0.7px">2024-06-17</div>
<div class="dot" style="left:259px;top:872px"></div>
<div class="row" style="left:278px;top:868.7px">关于知识产权管理系统<span style="display:inline-block;width:18px;text-align:right">“</span>专利及软件著作权申请<span style="display:inline-block;width:18px;text-align:left">”</span>...</div>
<div class="row" style="left:691px;top:868.7px;letter-spacing:0.7px">2024-04-10</div>
<div class="dot" style="left:259px;top:912px"></div>
<div class="row" style="left:278px;top:908.7px">历史数据查询及认领方法</div>
<div class="row" style="left:691px;top:908.7px;letter-spacing:0.7px">2024-04-24</div>
<div class="panel" style="left:850px;top:669px;width:585px;height:300px"></div>
<div class="sec-i" style="left:878px;top:698px"></div>
<svg class="a" style="left:878px;top:698px" width="24" height="24" viewBox="0 0 24 24" fill="none" stroke="#fff" stroke-width="1.7" stroke-linecap="round" stroke-linejoin="round"><path d="M11.5 4.3V16M7.3 11.5L11.5 15.8L15.7 11.5"/><path d="M4.5 14.3V19H19.3V14.3" stroke-width="2"/></svg>
<div class="sec-t" style="left:910px;top:699px">常用下载</div>
<div class="btn" style="left:1031px;top:695px;width:96px">上传模板</div>
<div class="more" style="left:1333px;top:702.5px">查看更多<svg style="position:absolute;left:65px;top:1.5px" width="14" height="13" viewBox="0 0 14 13" fill="none" stroke="#666" stroke-width="1.2"><path d="M1 0.6L6.4 6.3L1 12M7 0.6L12.4 6.3L7 12"/></svg></div>
<div class="dot" style="left:882px;top:752px"></div>
<div class="row" style="left:902px;top:748.7px">专利转化合同模板</div>
<div class="row" style="left:1296px;top:748.7px;letter-spacing:0.7px">2024-04-28</div>
<div class="dot" style="left:882px;top:792px"></div>
<div class="row" style="left:902px;top:788.7px">专利常用表格下载</div>
<div class="row" style="left:1296px;top:788.7px;letter-spacing:0.7px">2024-05-08</div>
<div class="dot" style="left:882px;top:832px"></div>
<div class="row" style="left:902px;top:828.7px">GF专利常用表格下载</div>
<div class="row" style="left:1296px;top:828.7px;letter-spacing:0.7px">2024-05-08</div>
<div class="dot" style="left:882px;top:872px"></div>
<div class="row" style="left:902px;top:868.7px">专利代理合同模板</div>
<div class="row" style="left:1296px;top:868.7px;letter-spacing:0.7px">2024-05-30</div>
<div class="panel" style="left:1453px;top:669px;width:382px;height:300px"></div>
<div class="sec-i" style="left:1481px;top:698px"></div>
<svg class="a" style="left:1481px;top:698px" width="24" height="24" viewBox="0 0 24 24" fill="none" stroke="#fff" stroke-width="1.9" stroke-linecap="round"><path d="M11 8.5L13 6.5A3.2 3.2 0 0 1 17.5 11L15.5 13"/><path d="M13 15.5L11 17.5A3.2 3.2 0 0 1 6.5 13L8.5 11"/><path d="M10 14L14 10"/></svg>
<div class="sec-t" style="left:1512px;top:699px">链接跳转</div>
<div class="btn" style="left:1634px;top:695px;width:96px">发布链接</div>
<div class="more" style="left:1733px;top:702.5px">查看更多<svg style="position:absolute;left:65px;top:1.5px" width="14" height="13" viewBox="0 0 14 13" fill="none" stroke="#666" stroke-width="1.2"><path d="M1 0.6L6.4 6.3L1 12M7 0.6L12.4 6.3L7 12"/></svg></div>
<div class="a" style="left:1482px;top:746px;width:159px;height:70px;border:1px solid #e4e7ed;border-radius:4px"></div>
<div class="a" style="left:1498px;top:764px;width:34px;height:34px"><svg width="34" height="34" viewBox="0 0 34 34" class="a" style="left:0;top:0"><circle cx="17" cy="17" r="16" fill="#eaf2fd" stroke="#2f6fc8" stroke-width="2"/><g fill="none" stroke="#2f6fc8" stroke-width="1.35"><rect x="8.1" y="16.6" width="11.6" height="6.2" rx="3.1" transform="rotate(-45 13.9 19.7)"/><rect x="14.3" y="11" width="11.6" height="6.2" rx="3.1" transform="rotate(-45 20.1 14.1)"/></g></svg></div>
<div class="t" style="left:1543px;top:768px;font-size:16px;line-height:24px;color:#333">国家知识产<br>权局</div>
<div class="a" style="left:1648px;top:746px;width:159px;height:70px;border:1px solid #e4e7ed;border-radius:4px"></div>
<div class="a" style="left:1664px;top:764px;width:34px;height:34px"><svg width="34" height="34" viewBox="0 0 34 34" class="a" style="left:0;top:0"><circle cx="17" cy="17" r="16" fill="#eaf2fd" stroke="#2f6fc8" stroke-width="2"/><g fill="none" stroke="#2f6fc8" stroke-width="1.35"><rect x="8.1" y="16.6" width="11.6" height="6.2" rx="3.1" transform="rotate(-45 13.9 19.7)"/><rect x="14.3" y="11" width="11.6" height="6.2" rx="3.1" transform="rotate(-45 20.1 14.1)"/></g></svg></div>
<div class="t" style="left:1709px;top:768px;font-size:16px;line-height:24px;color:#333">陕西省知识...</div>
<div class="a" style="left:1482px;top:822px;width:159px;height:70px;border:1px solid #e4e7ed;border-radius:4px"></div>
<div class="a" style="left:1498px;top:840px;width:34px;height:34px"><svg width="34" height="34" viewBox="0 0 34 34" class="a" style="left:0;top:0"><circle cx="17" cy="17" r="16" fill="#eaf2fd" stroke="#2f6fc8" stroke-width="2"/><g fill="none" stroke="#2f6fc8" stroke-width="1.35"><rect x="8.1" y="16.6" width="11.6" height="6.2" rx="3.1" transform="rotate(-45 13.9 19.7)"/><rect x="14.3" y="11" width="11.6" height="6.2" rx="3.1" transform="rotate(-45 20.1 14.1)"/></g></svg></div>
<div class="t" style="left:1543px;top:844px;font-size:16px;line-height:24px;color:#333">陕西省知识...</div>
<div class="a" style="left:1648px;top:822px;width:159px;height:70px;border:1px solid #e4e7ed;border-radius:4px"></div>
<div class="a" style="left:1664px;top:840px;width:34px;height:34px"><svg width="34" height="34" viewBox="0 0 34 34" class="a" style="left:0;top:0"><circle cx="17" cy="17" r="16" fill="#eaf2fd" stroke="#2f6fc8" stroke-width="2"/><g fill="none" stroke="#2f6fc8" stroke-width="1.35"><rect x="8.1" y="16.6" width="11.6" height="6.2" rx="3.1" transform="rotate(-45 13.9 19.7)"/><rect x="14.3" y="11" width="11.6" height="6.2" rx="3.1" transform="rotate(-45 20.1 14.1)"/></g></svg></div>
<div class="t" style="left:1709px;top:844px;font-size:16px;line-height:24px;color:#333">西安市知识...</div>
<div class="a" style="left:1683px;top:914px;width:24px;height:24px;background:#f4f4f5;border-radius:2px"></div>
<svg class="a" style="left:1683px;top:914px" width="24" height="24" viewBox="0 0 24 24" fill="none" stroke="#c0c4cc" stroke-width="1.2"><path d="M13.5 8L9.5 12L13.5 16"/></svg>
<div class="a" style="left:1715px;top:914px;width:24px;height:24px;background:#1f69c6;border-radius:2px;color:#fff;font-weight:bold;font-size:13px;line-height:24px;text-align:center">1</div>
<div class="a" style="left:1747px;top:914px;width:24px;height:24px;background:#f4f4f5;border-radius:2px;color:#333;font-size:13px;line-height:24px;text-align:center">2</div>
<div class="a" style="left:1779px;top:914px;width:24px;height:24px;background:#f4f4f5;border-radius:2px"></div>
<svg class="a" style="left:1779px;top:914px" width="24" height="24" viewBox="0 0 24 24" fill="none" stroke="#444" stroke-width="1.2"><path d="M10.5 8L14.5 12L10.5 16"/></svg>

</body></html>
